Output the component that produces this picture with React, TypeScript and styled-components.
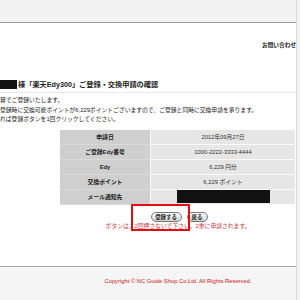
import styled, { createGlobalStyle } from "styled-components";

const GlobalStyle = createGlobalStyle`
  html, body {
    margin: 0;
    padding: 0;
    width: 300px;
    height: 300px;
    overflow: hidden;
    background: #f3f3f3;
    font-family: "Liberation Sans", "Noto Sans CJK JP", sans-serif;
    color: #222;
  }
`;

const Page = styled.div`
  width: 296px;
  height: 300px;
  background: #fff;
  border-right: 1px solid #d8d8d8;
  display: flex;
  flex-direction: column;
  overflow: hidden;
`;

const Header = styled.header`
  height: 22px;
  flex: none;
  background: #f2f2f2;
  border-bottom: 1px solid #9a9a9a;
`;

const Nav = styled.nav`
  margin-top: 17px;
  height: 10px;
  padding-left: 262px;
  font-size: 5.7px;
  line-height: 10px;
  font-weight: bold;
  white-space: nowrap;
`;

const TitleRow = styled.h1`
  margin: 27px 0 0;
  height: 14px;
  display: flex;
  align-items: center;
  gap: 1px;
  font-size: 7.2px;
  font-weight: bold;
  white-space: nowrap;
  border-bottom: 1px solid #e8e8e8;
  padding-bottom: 1px;
`;

const Masked = styled.span<{ $w: number; $h: number }>`
  display: inline-block;
  width: ${(p) => p.$w}px;
  height: ${(p) => p.$h}px;
  background: #111;
  vertical-align: middle;
`;

const Intro = styled.div`
  margin-top: 3px;
  font-size: 5.8px;
  line-height: 9.5px;
  white-space: nowrap;
  color: #222;
`;

const Table = styled.table`
  margin: 5px 0 0 60px;
  width: 235px;
  border-collapse: collapse;
  font-size: 5.8px;
`;

const Th = styled.th`
  width: 90px;
  height: 14px;
  padding: 0;
  background: #cfcfcf;
  border-bottom: 1px solid #dadada;
  font-weight: bold;
  text-align: center;
`;

const Td = styled.td`
  height: 14px;
  padding: 0;
  background: #e6e6e6;
  border-bottom: 1px solid #fafafa;
  border-left: 1px solid #fafafa;
  text-align: center;
  color: #333;
`;

const Actions = styled.div`
  position: relative;
  margin-left: 60px;
  width: 236px;
  display: flex;
  flex-direction: column;
  align-items: center;
`;

const Buttons = styled.div`
  margin-top: 7px;
  display: flex;
  gap: 5px;
  padding-left: 2px;
`;

const Button = styled.button<{ $w: number }>`
  width: ${(p) => p.$w}px;
  height: 10px;
  padding: 0;
  border: 1px solid #777;
  border-radius: 5px;
  background: linear-gradient(#fafafa, #d4d4d4);
  font-family: inherit;
  font-size: 5.4px;
  font-weight: bold;
  color: #222;
  line-height: 8px;
`;

const Notice = styled.p`
  margin: 0;
  font-size: 5.8px;
  line-height: 9px;
  color: #c43a3a;
  white-space: nowrap;
`;

const Marker = styled.div`
  position: absolute;
  left: 71px;
  top: -1px;
  width: 55px;
  height: 23px;
  border: 2px solid #e01010;
`;

const Spacer = styled.div`
  flex: 1;
`;

const Footer = styled.footer`
  height: 33px;
  flex: none;
  background: #f5f5f5;
  border-top: 1px solid #a8a8a8;
  padding-left: 60px;
  text-align: center;
  font-size: 5.8px;
  line-height: 28px;
  color: #c82020;
  white-space: nowrap;
`;

const rows: [string, React.ReactNode][] = [
  ["申請日", "2012年09月27日"],
  ["ご登録Edy番号", "1000-2222-3333-4444"],
  ["Edy", "6,229 円分"],
  ["交換ポイント", "6,229 ポイント"],
  ["メール通知先", <Masked $w={93} $h={13} />],
];

export default function App() {
  return (
    <>
      <GlobalStyle />
      <Page>
        <Header />
        <Nav>お問い合わせ</Nav>
        <TitleRow>
          <Masked $w={17} $h={9} />
          様「楽天Edy300」ご登録・交換申請の確認
        </TitleRow>
        <Intro>
          容でご登録いたします。
          <br />
          登録時に交換可能ポイントが6,229ポイントございますので、ご登録と同時に交換申請を承ります。
          <br />
          れば登録ボタンを1回クリックしてください。
        </Intro>
        <Table>
          <tbody>
            {rows.map(([label, value]) => (
              <tr key={label}>
                <Th>{label}</Th>
                <Td>{value}</Td>
              </tr>
            ))}
          </tbody>
        </Table>
        <Actions>
          <Buttons>
            <Button $w={31}>登録する</Button>
            <Button $w={21}>戻る</Button>
          </Buttons>
          <Notice>ボタンは、2回押さないで下さい。2重に申請されます。</Notice>
          <Marker />
        </Actions>
        <Spacer />
        <Footer>Copyright © NC Guide Shop Co.Ltd. All Rights Reserved.</Footer>
      </Page>
    </>
  );
}
